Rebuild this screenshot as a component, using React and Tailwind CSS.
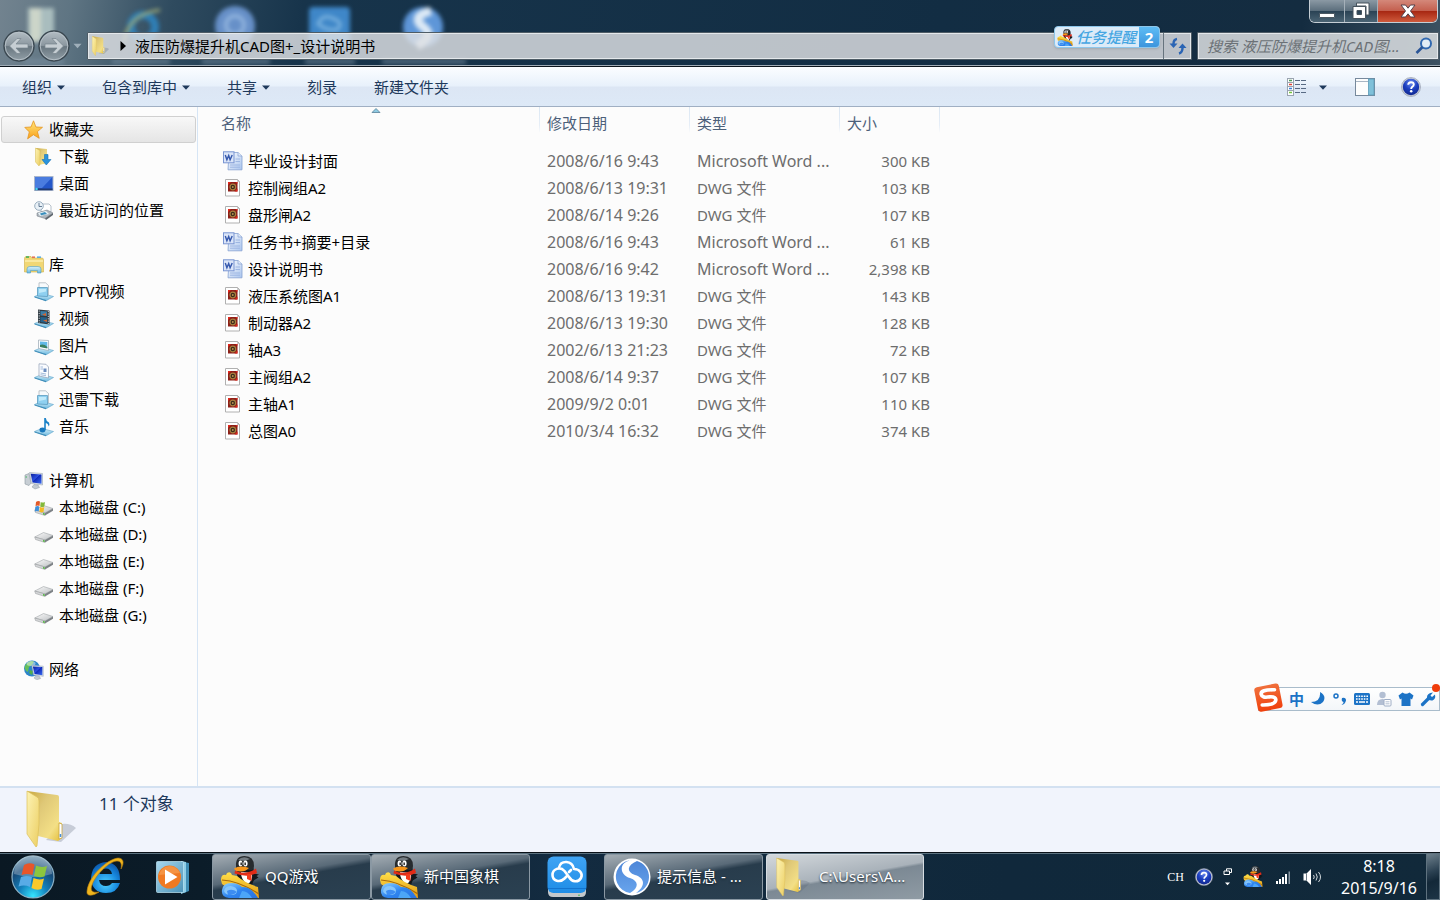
import React from "react";

const Defs = () => (
  <svg width="0" height="0" className="absolute" aria-hidden="true">
    <defs>
      <linearGradient id="folderFront" x1="0" y1="0" x2="1" y2="1">
        <stop offset="0" stopColor="#fdf3b4" />
        <stop offset="1" stopColor="#eccf64" />
      </linearGradient>
      <linearGradient id="folderBack" x1="0" y1="0" x2="1" y2="1">
        <stop offset="0" stopColor="#c9a83f" />
        <stop offset="0.35" stopColor="#dfc877" />
        <stop offset="0.75" stopColor="#f3df86" />
        <stop offset="1" stopColor="#e3bd35" />
      </linearGradient>
      <linearGradient id="screen" x1="0" y1="0" x2="1" y2="1">
        <stop offset="0" stopColor="#0a1f9c" />
        <stop offset="0.45" stopColor="#2b4fe0" />
        <stop offset="0.5" stopColor="#0f2bbb" />
        <stop offset="1" stopColor="#3c6cf0" />
      </linearGradient>
      <linearGradient id="tray" x1="0" y1="0" x2="0" y2="1">
        <stop offset="0" stopColor="#d8f1fb" />
        <stop offset="1" stopColor="#6bb7de" />
      </linearGradient>
      <linearGradient id="drive" x1="0" y1="0" x2="1" y2="1">
        <stop offset="0" stopColor="#fbfbfb" />
        <stop offset="1" stopColor="#bcbfc2" />
      </linearGradient>
      <radialGradient id="help" cx="0.5" cy="0.25" r="0.8">
        <stop offset="0" stopColor="#6f8ff0" />
        <stop offset="0.5" stopColor="#1c3fc0" />
        <stop offset="1" stopColor="#0f2488" />
      </radialGradient>
      <radialGradient id="orb" cx="0.5" cy="0.95" r="0.95">
        <stop offset="0" stopColor="#35e4ff" />
        <stop offset="0.35" stopColor="#1482bd" />
        <stop offset="0.7" stopColor="#164a78" />
        <stop offset="1" stopColor="#6d94ae" />
      </radialGradient>
      <radialGradient id="ieBlue" cx="0.5" cy="0.7" r="0.7">
        <stop offset="0" stopColor="#4fd0ff" />
        <stop offset="0.6" stopColor="#1687dd" />
        <stop offset="1" stopColor="#0d56a8" />
      </radialGradient>
      <linearGradient id="navGlass" x1="0" y1="0" x2="0" y2="1">
        <stop offset="0" stopColor="#b4bec5" />
        <stop offset="0.48" stopColor="#8b979f" />
        <stop offset="0.52" stopColor="#68767f" />
        <stop offset="1" stopColor="#93a0a8" />
      </linearGradient>
      <linearGradient id="sogou" x1="0" y1="0" x2="0" y2="1">
        <stop offset="0" stopColor="#f0703c" />
        <stop offset="1" stopColor="#f0400c" />
      </linearGradient>
      <linearGradient id="cloudBlue" x1="0" y1="0" x2="0" y2="1">
        <stop offset="0" stopColor="#3fa4f4" />
        <stop offset="1" stopColor="#1f8de6" />
      </linearGradient>
      <linearGradient id="wmp" x1="0" y1="0" x2="1" y2="1">
        <stop offset="0" stopColor="#a8d8ee" />
        <stop offset="1" stopColor="#4c93b8" />
      </linearGradient>
      <linearGradient id="swirl" x1="0" y1="0" x2="0" y2="1">
        <stop offset="0" stopColor="#4c86d8" />
        <stop offset="1" stopColor="#68a4ec" />
      </linearGradient>
      <linearGradient id="star" x1="0" y1="0" x2="0" y2="1">
        <stop offset="0" stopColor="#ffe77c" />
        <stop offset="1" stopColor="#f9a11b" />
      </linearGradient>
      <linearGradient id="wordPage" x1="0" y1="0" x2="1" y2="1">
        <stop offset="0" stopColor="#ffffff" />
        <stop offset="1" stopColor="#a9c4ee" />
      </linearGradient>
      <linearGradient id="board" x1="0" y1="0" x2="0" y2="1">
        <stop offset="0" stopColor="#ffe04a" />
        <stop offset="1" stopColor="#e49a12" />
      </linearGradient>
      <linearGradient id="wave" x1="0" y1="0" x2="1" y2="1">
        <stop offset="0" stopColor="#8fd2ff" />
        <stop offset="0.5" stopColor="#2f86f0" />
        <stop offset="1" stopColor="#2a72e0" />
      </linearGradient>
    </defs>
  </svg>
);

const Svg = ({ box = "0 0 20 20", className = "size-5 shrink-0", children }) => (
  <svg viewBox={box} className={className} aria-hidden="true">
    {children}
  </svg>
);

const Folder = ({ className }) => (
  <Svg box="0 0 50 58" className={className}>
    <path d="M35 52 L50 38 Q44 33 36 34 L20 50Z" fill="#5b6578" opacity="0.28" />
    <path d="M1 1 L31 5 Q33 5 33 7 V32 L36 33 V48 L32 51 L12 46Z" fill="url(#folderBack)" />
    <path d="M33 33 L36 34 V48 L33 49Z" fill="#fff" stroke="#c9a640" strokeWidth="0.8" />
    <path d="M33.700 44 h1.600 v3 h-1.600z" fill="#4a90d9" />
    <path d="M1 1 L11 7 Q13 8 13 11 V34 L11 56 L10 57 L1 44Z" fill="url(#folderFront)" stroke="#dcc05a" strokeWidth="0.7" />
  </Svg>
);

const Penguin = ({ className }) => (
  <Svg box="0 0 38 42" className={className}>
    <path d="M31 17 L38 18.500 L35.500 20 L37.500 21.500 L32 25Z" fill="#15181c" />
    <path d="M17 12 Q14 20 20 27 L31 29 Q35 20 32 11Z" fill="#15181c" />
    <path d="M20 16 Q20 24 26 28 Q32 26 31 17Z" fill="#fff" />
    <path d="M15 11 Q14 0 23.500 0 Q33 0 33 10 Q33 13 31 14 H16Z" fill="#272b2e" />
    <path d="M17 4 Q22 -1 29 3 L24 5Z" fill="#747c82" />
    <ellipse cx="19.500" cy="7.500" rx="1.900" ry="2.900" fill="#fff" />
    <ellipse cx="24.500" cy="7.500" rx="2.100" ry="3" fill="#fff" />
    <rect x="19.500" y="6.500" width="1.300" height="2.600" fill="#111" />
    <rect x="23.500" y="6.500" width="1.300" height="2.600" fill="#111" />
    <path d="M13 12.500 Q19 9 28 12 Q24 16 19 15.500 Q14 15.500 13 12.500Z" fill="#f7961b" />
    <path d="M14 14.500 Q24 20 35 12.500 L36 17 Q27 22 13.500 17.500Z" fill="#e22b17" />
    <path d="M26 18 h4.500 v7 l-4.500 -2z" fill="#f13a1c" />
    <path d="M0 24 Q0 18 5 19 L6 17 Q10 15 11 19 L16 20 Q24 27 37 31 L38 42 H20 L1 28Z" fill="url(#board)" />
    <path d="M1 24 Q18 25 38 38" fill="none" stroke="#a8690a" strokeWidth="1.200" />
    <path d="M1 34 Q2 27 10 27 Q17 27 21 31 Q30 30 37 42 H8 Q0 41 1 34Z" fill="url(#wave)" />
    <path d="M3 35 Q4 30 10 30 Q16 31 16 35 Q16 39 10 39 Q4 39 3 35Z" fill="#86c6fb" />
    <path d="M6 35 Q11 32 16 36 Q12 40 7 39Z" fill="#3d8df2" />
    <path d="M21 35 Q27 35 31 42 H18Z" fill="#4ca6f7" />
  </Svg>
);

const Help = ({ className }) => (
  <Svg className={className}>
    <circle cx="10" cy="10" r="9.500" fill="#c9ced8" stroke="#8a92a5" strokeWidth="0.6" />
    <circle cx="10" cy="10" r="8.200" fill="url(#help)" />
    <path d="M7.200 7.800 Q7.300 5.200 10 5.200 Q12.800 5.200 12.800 7.600 Q12.800 9 11.200 9.900 Q10.200 10.500 10.200 11.900" fill="none" stroke="#fff" strokeWidth="1.900" />
    <circle cx="10.200" cy="14.300" r="1.250" fill="#fff" />
  </Svg>
);

const Swirl = ({ className }) => (
  <Svg box="0 0 38 38" className={className}>
    <circle cx="19" cy="19" r="18.500" fill="#fff" />
    <path d="M20 2 C5 3 6 17 17 20 C26 23 26 30 17 35 A16.500 16.500 0 0 1 6 9 Q11 2 20 2Z" fill="url(#swirl)" />
    <path d="M24 3 A16.500 16.500 0 0 1 23 35 C33 28 32 20 22 17 C13 14 14 7 24 3Z" fill="url(#swirl)" />
  </Svg>
);

const CloudApp = ({ className }) => (
  <Svg box="0 0 40 41" className={className}>
    <path d="M1 33 H39 V36 Q39 41 34 41 H6 Q1 41 1 36Z" fill="#c3c8cc" />
    <rect x="0.500" y="0.500" width="39" height="36.500" rx="6" fill="url(#cloudBlue)" />
    <path d="M1 32.500 H39" stroke="#1575cf" strokeWidth="1" />
    <circle cx="32" cy="39.200" r="0.8" fill="#3bb54a" />
    <path d="M12 11.500 C14 4 25 4 27 13 C33 13 36 18 34 22 C31 27 25 26 22 21 L17.500 15 C13 10 5.500 13 5.500 19 C5.500 25 13 27 17.500 22.500 L19.500 20.500 M22 16 L24 14" fill="none" stroke="#fff" strokeWidth="2.600" strokeLinecap="round" strokeLinejoin="round" />
  </Svg>
);

const Explorer = ({ className }) => (
  <Svg box="0 0 40 40" className={className}>
    <path d="M35 23 H14 Q15 29 21 29 Q25 29 27 26 H35 Q32 36 21 36 Q7 36 6 21 Q7 6 21 5 Q35 6 35 23Z M14.500 17 H27 Q26 11.500 21 11.500 Q16 11.500 14.500 17Z" fill="url(#ieBlue)" fillRule="evenodd" />
    <path d="M36 12 C40 5 38 1 33 1 C23 2 4 18 2 34 C1 40 8 39 14 35 C7 36 5 34 7 28 C11 17 25 4 32 4 C36 4 37 7 36 12Z" fill="#efb51e" stroke="#b97e0c" strokeWidth="0.6" />
  </Svg>
);

const MediaPlayer = ({ className }) => (
  <Svg box="0 0 34 34" className={className}>
    <path d="M28 2 L33 3 V31 L28 33Z" fill="#3f8db5" />
    <path d="M25 1 L30 2 V32 L25 34Z" fill="#8fcfe8" />
    <rect x="0.500" y="1.500" width="27" height="31" rx="1" fill="url(#wmp)" stroke="#c2e6f5" strokeWidth="0.7" />
    <circle cx="13.500" cy="17" r="11.500" fill="#f07a22" />
    <path d="M3 15 A11 11 0 0 1 24 13Z" fill="#f8a359" opacity="0.6" />
    <path d="M9 9.500 L21.500 17 L9 24.500Z" fill="#fff" />
  </Svg>
);

const StartOrb = ({ className }) => (
  <Svg box="0 0 44 44" className={className}>
    <circle cx="22" cy="22" r="21" fill="url(#orb)" stroke="#8db3c8" strokeWidth="1.200" />
    <path d="M3 19 A19 19 0 0 1 41 19 Q22 25 3 19Z" fill="#fff" opacity="0.27" />
    <path d="M13 10 Q18 7 23.500 9.500 L21.500 20 Q16 18 10.500 20Z" fill="#e8562a" />
    <path d="M25 10.500 Q30.500 13 36 11 L33.500 21.500 Q28 23 23 21Z" fill="#8cc63e" />
    <path d="M10 22 Q15.500 20 21 22 L19 32 Q13.500 29.500 7.500 31.500Z" fill="#58abe6" />
    <path d="M22.500 23 Q28 25.500 33 23.500 L30.500 34 Q25.500 36 20.500 33Z" fill="#fbc92b" />
  </Svg>
);

const Star = () => (
  <Svg>
    <path d="M9.500 0.8 L11.900 7 L18.500 7.300 L13.400 11.600 L15.200 18.300 L9.400 14.700 L3.600 18.800 L5.300 11.900 L0.800 7.400 L7 7Z" fill="url(#star)" stroke="#e59420" strokeWidth="0.8" />
  </Svg>
);

const Download = () => (
  <Svg>
    <path d="M2 1 L13 2 V16 L5 18Z" fill="url(#folderBack)" />
    <path d="M1.500 1 L6 3.500 V17 L5 19 L1.500 15Z" fill="url(#folderFront)" stroke="#d5b850" strokeWidth="0.5" />
    <path d="M10.500 7.500 H14 V12.500 H17 L12.300 18 L8 12.500 H10.500Z" fill="#2a93dc" stroke="#1670b4" strokeWidth="0.6" />
  </Svg>
);

const Desktop = () => (
  <Svg>
    <rect x="0.500" y="2.500" width="18.500" height="14" fill="#2457c9" stroke="#a9b6cc" />
    <path d="M1 3 H18.500 L8 14 H1Z" fill="#6a9bf0" opacity="0.55" />
    <rect x="1" y="14.500" width="17.500" height="1.700" fill="#21396d" />
    <circle cx="2.500" cy="15" r="1.300" fill="#46d4ee" />
  </Svg>
);

const Recent = () => (
  <Svg>
    <path d="M7 3 H15 L17 5 V11 H7Z" fill="#fff" stroke="#9aa7b5" strokeWidth="0.7" />
    <path d="M3 12 L13 9 L19 12 L11 17.500 L3 15Z" fill="#aeb5bc" stroke="#6c7780" strokeWidth="0.5" />
    <path d="M4 12 L12 10 L15 13 L6 15Z" fill="#e8f3f8" />
    <path d="M6 12.500 L11 11 L13 13 L7 14.200Z" fill="#3b8ebc" />
    <path d="M11 17.500 L19 12 V14 L12 19Z" fill="#5e666e" />
    <circle cx="5" cy="5" r="4.300" fill="#e9f1f7" stroke="#8fa5b8" strokeWidth="0.9" />
    <path d="M5 2 V5.500 H8" fill="none" stroke="#56718a" strokeWidth="0.9" />
  </Svg>
);

const Library = () => (
  <Svg>
    <path d="M0.500 4 Q0.500 1.500 2 1.500 H7 L8 3 H18 Q19.500 3 19.500 5 V17 H0.500Z" fill="#f1d775" stroke="#cfae48" strokeWidth="0.6" />
    <rect x="2" y="1.300" width="3" height="1.500" fill="#3dae56" />
    <rect x="8" y="1.500" width="3" height="1.300" fill="#e2573b" />
    <rect x="13" y="1.500" width="4" height="1.300" fill="#3da0dc" />
    <path d="M1 6 H19" stroke="#fff3bd" strokeWidth="1.200" />
    <path d="M3 18 V14 Q3 11.500 6 11.500 H14 Q17 11.500 17 14 V18 H13.500 V15.500 H6.500 V18Z" fill="url(#tray)" stroke="#4f9dc5" strokeWidth="0.6" />
  </Svg>
);

const Stand = () => (
  <>
    <path d="M0.500 14.500 L8 11.500 L19.500 14.500 L12 18.800Z" fill="url(#tray)" stroke="#5ba3c9" strokeWidth="0.6" />
    <path d="M0.500 14.500 L12 18 V19.200 L0.500 15.500Z" fill="#3f8db8" />
  </>
);

const LibGeneric = () => (
  <Svg>
    <Stand />
    <path d="M5 0.800 H11.500 L14.500 3.500 V13 H5Z" fill="#f7fafc" stroke="#a3adb6" strokeWidth="0.7" />
    <path d="M3.500 5.500 L13.500 5.500 V14.500 L3.500 14Z" fill="#8fd0f0" stroke="#5b9cc0" strokeWidth="0.8" />
    <path d="M5 7 H12 V9.500 L5 11Z" fill="#c1eafa" />
  </Svg>
);

const LibVideo = () => (
  <Svg>
    <Stand />
    <path d="M4 0.500 L15.500 1.500 V15.500 L4 14Z" fill="#303a42" />
    <path d="M6.500 2 L13 2.500 V7 L6.500 6.500Z" fill="#3b7fa9" />
    <path d="M6.500 8 L13 8.500 V14 L6.500 13Z" fill="#24618b" />
    <path d="M8 5.500 l4 -1.500 v3z M9 11.500 l4 -1 v2.500z" fill="#d5642f" />
    <path d="M5.200 1.500 V14 M14.300 2 V15" stroke="#cfd8de" strokeWidth="1" strokeDasharray="1.200 1.200" />
  </Svg>
);

const LibPicture = () => (
  <Svg>
    <Stand />
    <path d="M4.500 4 L14.500 4.500 V14.500 L4.500 12.500Z" fill="#fafcfd" stroke="#98a6b2" strokeWidth="0.7" />
    <path d="M6 5.500 L13.300 6 V12 L6 10.800Z" fill="#62b9e8" />
    <path d="M6 9 Q10 7.500 13.300 11 V12.500 L6 11Z" fill="#3c8060" />
  </Svg>
);

const LibDocument = () => (
  <Svg>
    <Stand />
    <path d="M5 0.800 L12 1.300 L14.500 4 V15 L5 13Z" fill="#fafcff" stroke="#8f9eb4" strokeWidth="0.7" />
    <path d="M6.500 4 H9 M6.500 6 H9 M6.500 10 L12 11 M6.500 11.700 L12 12.700" stroke="#8facd0" strokeWidth="0.8" />
    <rect x="9.500" y="5.500" width="3" height="3.500" fill="#6c8dc0" />
  </Svg>
);

const LibMusic = () => (
  <Svg>
    <Stand />
    <ellipse cx="8.500" cy="13" rx="3" ry="2.400" fill="#1877bd" />
    <path d="M10.200 13 V1 H11.800 Q12 4 15 5.500 Q16 7.500 14.500 9.500 Q14.500 6.500 11.800 6 V13Z" fill="#1c82c8" />
  </Svg>
);

const Monitor = () => (
  <>
    <path d="M5.500 1.500 L18.500 2.500 V14 L7.500 12.500Z" fill="#dce3ea" stroke="#9aa6b2" strokeWidth="0.6" />
    <path d="M6.700 2.700 L17.500 3.500 V12.800 L8.500 11.500Z" fill="url(#screen)" />
    <path d="M10 13.500 L14 14 L15.500 16.500 L11 18 L8 16Z" fill="#c2cad2" stroke="#8d98a3" strokeWidth="0.5" />
  </>
);

const Computer = () => (
  <Svg>
    <path d="M1 4 L5 2.500 L7 12 L5 14.500 L1 13Z" fill="#c7ced4" stroke="#8c979f" strokeWidth="0.6" />
    <path d="M1.500 6 H3" stroke="#43b85a" strokeWidth="1" />
    <Monitor />
  </Svg>
);

const Network = () => (
  <Svg>
    <circle cx="8" cy="8.500" r="8" fill="#2d86c9" />
    <path d="M2 4 Q6 0 10 1.500 L8 5 L5 7 L4 12 Q1 11 0.500 7Z" fill="#66bf5b" />
    <path d="M6 10 l3 1 -1 4 -3 -2z" fill="#4fae4c" />
    <ellipse cx="7" cy="3.500" rx="4.500" ry="2.500" fill="#fff" opacity="0.45" />
    <g transform="translate(3 4) scale(0.88)">
      <Monitor />
    </g>
  </Svg>
);

const DriveShape = () => (
  <>
    <path d="M0.800 12 L9.500 7.500 L19 10.500 L11 15Z" fill="url(#drive)" stroke="#a0a4a7" strokeWidth="0.6" />
    <path d="M0.800 12 L11 15 V17.500 L1.500 14.500Z" fill="#d5d7d9" stroke="#8e9295" strokeWidth="0.5" />
    <path d="M11 15 L19 10.500 V12.800 L11 17.500Z" fill="#7d8286" />
    <path d="M9 15 l1.700 0.500 v1.500 l-1.700 -0.500z" fill="#48b733" />
  </>
);

const Drive = () => (
  <Svg>
    <DriveShape />
  </Svg>
);

const SystemDrive = () => (
  <Svg>
    <DriveShape />
    <path d="M2 4 Q4 2.500 6 3.500 L5.500 8 Q3.500 7 1.500 8.300Z" fill="#e25a28" />
    <path d="M6.700 4 Q9 5 11 4 L10.300 8.500 Q8.500 9.500 6.200 8.500Z" fill="#83b93a" />
    <path d="M1.300 8.800 Q3.500 7.500 5.300 8.500 L4.700 13.300 Q2.800 12.500 0.800 13.500Z" fill="#3f90da" />
    <path d="M6 9 Q8.500 10 10.300 9 L9.500 14 Q7.500 15 5.400 13.800Z" fill="#f4bb24" />
  </Svg>
);

const WordFile = () => (
  <Svg className="mb-0.5 size-5 shrink-0">
    <path d="M6 1.500 H15 L19 5 V18.800 H5Z" fill="url(#wordPage)" stroke="#86a2d2" strokeWidth="0.8" />
    <path d="M15 1.500 V5 H19" fill="#dfe9f8" stroke="#86a2d2" strokeWidth="0.7" />
    <path d="M7 14 H17 M7 16.200 H17 M12.500 8 H17 M12.500 10.500 H17" stroke="#9db6e2" strokeWidth="1" />
    <rect x="0.500" y="0.800" width="10.500" height="11" fill="#dbe5f8" stroke="#7995d2" />
    <path d="M2.300 4 L3.900 8.800 L5.700 4.500 L7.100 8.800 L9.200 4" fill="none" stroke="#3558ad" strokeWidth="1.400" />
  </Svg>
);

const DwgFile = () => (
  <Svg className="mb-0.5 size-5 shrink-0">
    <path d="M2.500 1.500 H14.500 L16.500 3.500 V18 H2.500Z" fill="#fff" stroke="#b0b0b0" />
    <path d="M14.500 1.500 V3.500 H16.500" fill="none" stroke="#b0b0b0" strokeWidth="0.7" />
    <rect x="5" y="4" width="9.500" height="9.500" fill="#8c2018" />
    <path d="M5 4 h3 l-3 3z M14.500 4 h-2 l2 2z M14.500 13.500 h-3 l3 -3z" fill="#e0261b" />
    <circle cx="9.800" cy="9" r="2.800" fill="#3c2c1c" stroke="#a8813f" strokeWidth="1.200" />
    <circle cx="9.800" cy="9" r="0.9" fill="#c2964f" />
  </Svg>
);

const Caret = () => (
  <svg viewBox="0 0 8 5" className="h-[5px] w-2" aria-hidden="true">
    <path d="M0 0.500 H8 L4 4.800Z" fill="#1e395b" />
  </svg>
);

const nav = [
  {
    label: "收藏夹",
    Icon: Star,
    active: true,
    items: [
      ["下载", Download],
      ["桌面", Desktop],
      ["最近访问的位置", Recent],
    ],
  },
  {
    label: "库",
    Icon: Library,
    items: [
      ["PPTV视频", LibGeneric],
      ["视频", LibVideo],
      ["图片", LibPicture],
      ["文档", LibDocument],
      ["迅雷下载", LibGeneric],
      ["音乐", LibMusic],
    ],
  },
  {
    label: "计算机",
    Icon: Computer,
    items: [
      ["本地磁盘 (C:)", SystemDrive],
      ["本地磁盘 (D:)", Drive],
      ["本地磁盘 (E:)", Drive],
      ["本地磁盘 (F:)", Drive],
      ["本地磁盘 (G:)", Drive],
    ],
  },
  { label: "网络", Icon: Network, items: [] },
];

const WORD = "Microsoft Word ...";
const DWG = "DWG 文件";
const files = [
  ["毕业设计封面", "2008/6/16 9:43", WORD, "300 KB"],
  ["控制阀组A2", "2008/6/13 19:31", DWG, "103 KB"],
  ["盘形闸A2", "2008/6/14 9:26", DWG, "107 KB"],
  ["任务书+摘要+目录", "2008/6/16 9:43", WORD, "61 KB"],
  ["设计说明书", "2008/6/16 9:42", WORD, "2,398 KB"],
  ["液压系统图A1", "2008/6/13 19:31", DWG, "143 KB"],
  ["制动器A2", "2008/6/13 19:30", DWG, "128 KB"],
  ["轴A3", "2002/6/13 21:23", DWG, "72 KB"],
  ["主阀组A2", "2008/6/14 9:37", DWG, "107 KB"],
  ["主轴A1", "2009/9/2 0:01", DWG, "110 KB"],
  ["总图A0", "2010/3/4 16:32", DWG, "374 KB"],
];

const DesktopBehindGlass = () => (
  <svg viewBox="0 0 480 66" className="absolute left-0 top-0 h-[66px] w-[480px] blur-[2px]" aria-hidden="true">
    <path d="M28 8 H54 V38 H28Z" fill="#a9bdbe" />
    <path d="M30 8 H41 V42 H30Z" fill="#ccd5c9" />
    <circle cx="143" cy="27" r="12" fill="none" stroke="#2f7fb6" strokeWidth="8" />
    <path d="M124 42 Q128 14 160 10" fill="none" stroke="#98a678" strokeWidth="3" />
    <circle cx="235" cy="26" r="20" fill="#6790c8" />
    <circle cx="235" cy="25" r="9" fill="none" stroke="#8fb2dd" strokeWidth="4" />
    <rect x="309" y="7" width="41" height="40" rx="4" fill="#3f87c8" />
    <path d="M318 24 Q322 14 332 18 Q344 22 338 29 Q328 32 318 24Z" fill="none" stroke="#7db4e0" strokeWidth="3" />
    <circle cx="423" cy="27" r="20" fill="#5e96d8" />
    <path d="M431 11 Q411 16 422 26 Q436 35 417 46" fill="none" stroke="#dce9f5" strokeWidth="9" />
    <g fill="#7d93a5" opacity="0.55">
      <rect x="24" y="59" width="40" height="5" />
      <rect x="112" y="59" width="58" height="5" />
      <rect x="202" y="59" width="68" height="5" />
      <rect x="305" y="59" width="50" height="5" />
      <rect x="382" y="59" width="84" height="5" />
    </g>
  </svg>
);

const NavButton = ({ label, flip }) => (
  <button aria-label={label} className="size-8">
    <svg viewBox="0 0 32 32" className={flip ? "size-8 -scale-x-100" : "size-8"} aria-hidden="true">
      <circle cx="16" cy="16" r="15" fill="url(#navGlass)" stroke="#3a4750" strokeWidth="1.400" />
      <circle cx="16" cy="16" r="13.800" fill="none" stroke="#b9c3c9" strokeWidth="0.900" />
      <path d="M6.500 16 L14 8.500 H18 L13 14 H25 V18 H13 L18 23.500 H14Z" fill="#c6ced3" stroke="#77848c" strokeWidth="0.7" />
    </svg>
  </button>
);

const TitleBar = () => (
  <header className="relative h-[67px] shrink-0 overflow-hidden border-b border-[#0b141c] bg-[linear-gradient(100deg,#72838f_0,#5f7583_70px,#2f4b5f_170px,#17344b_300px,#122d43_65%,#142c40_90%,#3d5262_100%)]">
    <DesktopBehindGlass />
    <div className="relative flex h-full flex-col justify-between border-b border-[#9fabb5] pb-[5px]">
      <div className="flex h-[23px] justify-end pr-[2px]">
        <div className="flex overflow-hidden rounded-b-md border border-t-0 border-[#c5ced5] bg-[#22394b]">
          <button aria-label="最小化" className="flex w-[35px] items-center justify-center border-r border-[#a5b0b9] bg-[linear-gradient(#8b99a4,#5c6f7d_48%,#2b4355_52%,#4b6474)] pt-2">
            <span className="h-[5px] w-4 rounded-[1px] border border-[#4b5862] bg-white" />
          </button>
          <button aria-label="向下还原" className="flex w-[33px] items-center justify-center border-r border-[#a5b0b9] bg-[linear-gradient(#8b99a4,#5c6f7d_48%,#2b4355_52%,#4b6474)]">
            <svg viewBox="0 0 18 18" className="size-[18px]" aria-hidden="true">
              <path d="M4.500 1 H17 V13 H14 V4 H4.500Z" fill="#fff" stroke="#47535d" />
              <path d="M1 4.500 H13.500 V16.500 H1Z M5 8.500 V12.500 H9.500 V8.500Z" fill="#fff" stroke="#47535d" fillRule="evenodd" />
            </svg>
          </button>
          <button aria-label="关闭" className="flex w-[59px] items-center justify-center bg-[linear-gradient(#d4887a,#c4604f_48%,#a82813_52%,#cf5a3c)]">
            <svg viewBox="0 0 16 14" className="h-3.5 w-4" aria-hidden="true">
              <path d="M1 1 H5.500 L8 4.200 L10.500 1 H15 L10.500 7 L15 13 H10.500 L8 9.800 L5.500 13 H1 L5.500 7Z" fill="#fff" stroke="#54414a" />
            </svg>
          </button>
        </div>
      </div>
      <div className="flex h-7 items-center gap-[5px] pl-[3px] pr-px">
        <div className="flex items-center gap-[3px]">
          <NavButton label="后退" />
          <NavButton label="前进" flip />
          <button aria-label="最近浏览" className="flex w-[9px] items-center justify-center">
            <svg viewBox="0 0 10 6" className="h-1.5 w-2.5" aria-hidden="true">
              <path d="M0.500 0.500 H9.500 L5 5.500Z" fill="#9fafba" />
            </svg>
          </button>
        </div>
        <div className="flex h-7 min-w-0 flex-1 items-stretch rounded-[1px] border border-[#4e5c66] bg-[#dde0e3d4] ring-1 ring-inset ring-[#e4e8eb]">
          <Folder className="ml-[3px] mt-[3px] h-5 w-[19px] shrink-0" />
          <button aria-label="展开位置" className="ml-px flex w-6 items-center justify-center">
            <svg viewBox="0 0 6 10" className="h-2.5 w-1.5" aria-hidden="true">
              <path d="M0.500 0 L6 5 L0.500 10Z" fill="#000" />
            </svg>
          </button>
          <button className="whitespace-nowrap text-[15px] leading-6 text-black">液压防爆提升机CAD图+_设计说明书</button>
          <div className="flex-1" />
          <button aria-label="刷新" className="flex w-7 items-center justify-center border-l border-[#66737d]">
            <svg viewBox="0 0 18 18" className="size-[18px]" aria-hidden="true">
              <path d="M8 2 Q4.500 2.500 4.500 7" fill="none" stroke="#2a64b4" strokeWidth="2.400" />
              <path d="M0.500 6.500 H8.500 L4.500 11Z" fill="#2a64b4" />
              <path d="M10 16.500 Q13.500 15.500 13.500 11" fill="none" stroke="#2a64b4" strokeWidth="2.400" />
              <path d="M9.500 11 H17.500 L13.500 6.500Z" fill="#2a64b4" />
            </svg>
          </button>
        </div>
        <label className="flex h-7 w-[242px] items-center rounded-[1px] border border-[#4e5c66] bg-[#dde0e3d9] pl-[9px] pr-[5px] ring-1 ring-inset ring-[#e4e8eb]">
          <input
            aria-label="搜索"
            placeholder="搜索 液压防爆提升机CAD图..."
            className="min-w-0 flex-1 bg-transparent text-[15px] italic text-black outline-none placeholder:text-[#6b7176]"
          />
          <svg viewBox="0 0 18 18" className="size-[18px]" aria-hidden="true">
            <circle cx="11" cy="6.500" r="5" fill="#e3edf5" stroke="#3169b0" strokeWidth="2" />
            <path d="M7.500 10 L1.500 16" stroke="#2a5596" strokeWidth="2.600" />
          </svg>
        </label>
      </div>
    </div>
    <button className="absolute right-[280px] top-[26px] flex h-[22px] items-stretch overflow-hidden rounded-[4px] border border-[#8dc6ea] bg-[#dcebf8] shadow">
      <Penguin className="my-auto ml-[2px] h-[17px] w-4" />
      <span className="px-[3px] text-[15px] font-medium italic leading-5 text-[#46a6e2]">任务提醒</span>
      <span className="flex w-5 items-center justify-center bg-[linear-gradient(#5dbcf5,#3c95dd)] text-[15px] font-bold text-white">2</span>
    </button>
  </header>
);

const Toolbar = () => (
  <div className="flex h-10 shrink-0 items-center justify-between border-b border-[#a0afc3] bg-[linear-gradient(#fbfdff,#e8f1fb_48%,#dce6f4_52%,#dde9f7)] pl-[22px] pr-[19px] pt-px text-[15px] text-[#1e395b]">
    <div className="flex items-center gap-[37px]">
      {[
        ["组织", true],
        ["包含到库中", true],
        ["共享", true],
        ["刻录", false],
        ["新建文件夹", false],
      ].map(([label, menu]) => (
        <button key={label} className="flex items-center gap-[5px]">
          {label}
          {menu && <Caret />}
        </button>
      ))}
    </div>
    <div className="flex items-center">
      <button aria-label="更改视图">
        <svg viewBox="0 0 20 18" className="h-[18px] w-5" aria-hidden="true">
          <rect x="0.500" y="0.500" width="6" height="17" fill="#fff" stroke="#9aa4b0" />
          <path d="M0.500 4.500 H6.500 M0.500 8.500 H6.500 M0.500 12.500 H6.500" stroke="#9aa4b0" />
          <path d="M2 2.500 H5" stroke="#4a9a58" strokeWidth="1.500" />
          <path d="M2 6.500 H5" stroke="#e0453a" strokeWidth="1.500" />
          <path d="M2 10.500 H5" stroke="#3b7ed8" strokeWidth="1.500" />
          <path d="M2 14.500 H5" stroke="#73c33c" strokeWidth="1.500" />
          <path d="M8 2.500 H19 M8 6.500 H19 M8 10.500 H19 M8 14.500 H19" stroke="#586a84" strokeDasharray="5 1" />
        </svg>
      </button>
      <button aria-label="更多视图选项" className="ml-3">
        <Caret />
      </button>
      <button aria-label="显示预览窗格" className="ml-7">
        <svg viewBox="0 0 20 18" className="h-[18px] w-5" aria-hidden="true">
          <rect x="0.500" y="0.500" width="19" height="17" fill="#fdfdfd" stroke="#77899c" />
          <path d="M1 3.500 H13" stroke="#a9b6c4" />
          <rect x="13.500" y="1" width="5.500" height="16" fill="#7fc0d9" stroke="#5b9bb8" strokeWidth="0.8" />
        </svg>
      </button>
      <button aria-label="获取帮助" className="ml-[26px]">
        <Help className="size-5" />
      </button>
    </div>
  </div>
);

const Sidebar = () => (
  <nav className="flex w-[198px] shrink-0 flex-col gap-[27px] border-r border-[#d6e5f5] pt-[9px] text-[15px]">
    {nav.map(({ label, Icon, active, items }) => (
      <div key={label}>
        <a
          href="#"
          className={
            active
              ? "mx-px flex h-[27px] items-center gap-[5px] rounded-[3px] border border-[#d0d0d0] bg-[linear-gradient(#f8f8f8,#e5e5e5)] pl-[22px]"
              : "flex h-[27px] items-center gap-[5px] pl-6"
          }
        >
          <Icon />
          {label}
        </a>
        {items.map(([name, ItemIcon]) => (
          <a key={name} href="#" className="flex h-[27px] items-center gap-[5px] pl-[34px]">
            <ItemIcon />
            {name}
          </a>
        ))}
      </div>
    ))}
  </nav>
);

const HeadCell = ({ label, pad, width, sorted }) => (
  <th scope="col" className={`${width} h-[41px] p-0 text-left align-top font-normal`}>
    <div className={`${pad} relative flex h-8 items-start justify-between`}>
      <button className="h-8">{label}</button>
      {sorted && (
        <svg viewBox="0 0 10 5" className="absolute left-[173px] top-px h-[5px] w-2.5" aria-hidden="true">
          <path d="M1 4.500 L5 0.500 L9 4.500Z" fill="#8fcbe3" stroke="#47738c" strokeWidth="0.7" />
        </svg>
      )}
      <span className="h-[26px] w-px bg-[linear-gradient(#dbe7f3,#e6eef7_70%,#fcfcfc)]" />
    </div>
  </th>
);

const FileList = () => (
  <main className="min-w-0 flex-1">
    <table className="w-[742px] table-fixed border-collapse text-[15px]">
      <thead className="text-[#4c607a]">
        <tr>
          <HeadCell label="名称" width="w-[342px]" pad="pl-[23px]" sorted />
          <HeadCell label="修改日期" width="w-[150px]" pad="pl-[7px]" />
          <HeadCell label="类型" width="w-[150px]" pad="pl-[7px]" />
          <HeadCell label="大小" width="w-[100px]" pad="pl-[7px]" />
        </tr>
      </thead>
      <tbody className="text-[#6d6d6d]">
        {files.map(([name, date, type, size]) => (
          <tr key={name} className="h-[27px]">
            <td className="p-0 pl-[25px]">
              <span className="flex items-center gap-[5px] text-black">
                {type === WORD ? <WordFile /> : <DwgFile />}
                {name}
              </span>
            </td>
            <td className="whitespace-nowrap p-0 pb-0.5 pl-[7px] text-base leading-5">{date}</td>
            <td className={type === WORD ? "whitespace-nowrap p-0 pb-0.5 pl-[7px] text-base leading-5" : "whitespace-nowrap p-0 pl-[7px]"}>
              {type}
            </td>
            <td className="whitespace-nowrap p-0 pr-[10px] text-right">{size}</td>
          </tr>
        ))}
      </tbody>
    </table>
  </main>
);

const Ime = () => (
  <div className="absolute right-0 top-[684px] flex h-7 items-center">
    <div className="mt-0.5 flex h-6 items-center gap-[6px] border border-[#a9bccb] bg-[linear-gradient(#ffffff,#f3f6f9)] pl-[30px] pr-[3px] text-[#1c73c6]">
      <button className="text-[15px] font-bold leading-5">中</button>
      <button aria-label="半角">
        <Svg box="0 0 16 16" className="size-4">
          <path d="M10 1 Q17 5 13 11 Q8 16 1 11 Q11 11 10 1Z" fill="#1c73c6" />
        </Svg>
      </button>
      <button aria-label="中文标点">
        <Svg box="0 0 16 16" className="size-4">
          <circle cx="4" cy="5" r="2" fill="none" stroke="#1c73c6" strokeWidth="1.500" />
          <path d="M10 7 Q14 6 14 9.500 Q13 13.500 9.500 14 Q12 12 11.500 11 Q9 10.500 10 7Z" fill="#1c73c6" />
        </Svg>
      </button>
      <button aria-label="软键盘">
        <Svg box="0 0 16 16" className="size-4">
          <rect x="0" y="2" width="16" height="12" rx="1.500" fill="#1c73c6" />
          <path d="M2 5.200 H14 M2 8 H14" stroke="#fff" strokeWidth="1.500" strokeDasharray="1.600 1" />
          <path d="M2 11 H4 M5 11 H11 M12 11 H14" stroke="#fff" strokeWidth="1.500" />
        </Svg>
      </button>
      <button aria-label="登录">
        <Svg box="0 0 16 16" className="size-4">
          <circle cx="6.500" cy="4" r="3.200" fill="#b3bfd3" />
          <path d="M1 14 Q1 8 6.500 8 Q12 8 12 14Z" fill="#b3bfd3" />
          <rect x="8" y="8.500" width="7" height="6.500" rx="1" fill="#fff" stroke="#9eadc5" />
          <path d="M9.500 10.800 H13.500 M9.500 12.800 H13.500" stroke="#9eadc5" strokeWidth="0.8" />
        </Svg>
      </button>
      <button aria-label="皮肤">
        <Svg box="0 0 16 16" className="size-4">
          <path d="M4.500 1.500 Q8 4 11.500 1.500 L15.500 4.500 L14 8.500 L12.500 7.500 V15 H3.500 V7.500 L2 8.500 L0.500 4.500Z" fill="#1c73c6" />
        </Svg>
      </button>
      <button aria-label="工具箱">
        <Svg box="0 0 16 16" className="size-4">
          <path d="M2.500 13.500 L9 7" stroke="#1c73c6" strokeWidth="3.200" strokeLinecap="round" />
          <path d="M13 1.500 L10.500 4.500 L12 6 L15 3.500 Q16 8 12.500 9.500 Q8.500 10 7 7 Q6.500 2 13 1.500Z" fill="#1c73c6" />
        </Svg>
      </button>
    </div>
    <svg viewBox="0 0 30 30" className="absolute -left-1 -top-px size-[30px]" aria-hidden="true">
      <g transform="rotate(-11 15 15)">
        <rect x="2" y="2" width="25" height="25" rx="3" fill="url(#sogou)" />
        <path d="M22 8 Q8 5 8 10 Q8 14 16 14 Q23 15 21 19 Q19 23 7 20.500" fill="none" stroke="#fff" strokeWidth="3.600" strokeLinecap="round" />
      </g>
    </svg>
    <span className="absolute right-0 top-0 size-2 rounded-full bg-[#f03c0a]" />
  </div>
);

const TaskButton = ({ children, label, light }) => (
  <button
    className={
      light
        ? "flex h-[46px] w-[158px] items-center gap-[5px] rounded-[3px] border border-[#d7dde2] bg-[linear-gradient(170deg,#d3d8dc,#a9b2ba_48%,#7c8994_52%,#8f9ba4)] pl-[9px] text-[15px] text-white"
        : "flex h-[46px] w-[159px] items-center gap-[6px] rounded-[3px] border border-[#8a98a3] bg-[linear-gradient(170deg,#a4adb4,#596a78_42%,#283c4c_50%,#2b4152)] pl-2 text-[15px] text-white"
    }
  >
    {children}
    <span className="whitespace-nowrap [text-shadow:0_1px_2px_#17232d]">{label}</span>
  </button>
);

const Taskbar = () => (
  <footer className="flex h-12 shrink-0 items-center border-t border-[#0a1118] bg-[linear-gradient(90deg,#0a1823,#0b1c29_14%,#132b40_38%,#10283b_70%,#11293a)] shadow-[inset_0_1px_0_#5c7280]">
    <button aria-label="开始" className="ml-[11px]">
      <StartOrb className="size-11" />
    </button>
    <button aria-label="Internet Explorer" className="ml-[30px]">
      <Explorer className="size-10" />
    </button>
    <button aria-label="Windows Media Player" className="ml-[31px]">
      <MediaPlayer className="size-[34px]" />
    </button>
    <div className="ml-[22px] flex">
      <TaskButton label="QQ游戏">
        <Penguin className="h-[42px] w-[38px]" />
      </TaskButton>
      <TaskButton label="新中国象棋">
        <Penguin className="h-[42px] w-[38px]" />
      </TaskButton>
    </div>
    <button aria-label="云盘" className="ml-4">
      <CloudApp className="h-[41px] w-[42px]" />
    </button>
    <div className="ml-4 flex gap-[3px]">
      <TaskButton label="提示信息 - ...">
        <Swirl className="size-[38px]" />
      </TaskButton>
      <TaskButton label="C:\Users\A..." light>
        <Folder className="mr-1 h-10 w-[34px]" />
      </TaskButton>
    </div>
    <div className="ml-auto flex h-full items-center text-white">
      <button className="font-['Liberation_Serif',serif] text-xs">CH</button>
      <button aria-label="帮助" className="ml-[11px]">
        <Help className="size-[18px]" />
      </button>
      <button aria-label="语言栏选项" className="ml-[10px]">
        <Svg box="0 0 10 18" className="h-[18px] w-2.5">
          <path d="M3.500 3 V0.800 H8.500 V4.500 H6.500 M1 3 H6.500 V6.500 H1Z" fill="none" stroke="#fff" />
          <path d="M2 14.500 H7 L4.500 17.300Z" fill="#fff" />
        </Svg>
      </button>
      <button aria-label="QQ游戏托盘" className="ml-[10px]">
        <Penguin className="h-[21px] w-5" />
      </button>
      <button aria-label="网络信号" className="ml-3">
        <Svg box="0 0 16 14" className="h-3.5 w-4">
          <path d="M1 14 v-3 h2 v3z M4 14 v-5 h2 v5z M7 14 v-7 h2 v7z M10 14 v-10 h2 v10z" fill="#fff" />
          <path d="M13.500 14 V1.500 H15 V14Z" fill="#8494a0" />
        </Svg>
      </button>
      <button aria-label="音量" className="ml-3">
        <Svg box="0 0 20 18" className="h-[18px] w-5">
          <path d="M0.500 5.500 H3.500 L8 1 V17 L3.500 12.500 H0.500Z" fill="#fff" />
          <path d="M3.500 5.500 V12.500" stroke="#4b5c68" strokeWidth="0.8" />
          <path d="M10.500 7 Q12 9 10.500 11 M13 5.500 Q15.500 9 13 12.500 M15.500 4 Q19.500 9 15.500 14" fill="none" stroke="#d3dade" />
        </Svg>
      </button>
      <button className="ml-4 w-[80px] text-center text-base leading-[22px]">
        <time className="block">8:18</time>
        <time className="block">2015/9/16</time>
      </button>
      <button
        aria-label="显示桌面"
        className="ml-[7px] h-full w-3.5 border border-[#5f727f] bg-[linear-gradient(160deg,#6f818d,#2b4152_40%,#132838_60%,#1e3546)]"
      />
    </div>
  </footer>
);

export default function App() {
  return (
    <div className="relative flex min-h-screen flex-col overflow-hidden bg-[#fcfcfc] font-['Noto_Sans','Noto_Sans_CJK_SC',sans-serif] text-black">
      <Defs />
      <TitleBar />
      <Toolbar />
      <div className="flex flex-1">
        <Sidebar />
        <FileList />
      </div>
      <section className="flex h-[66px] shrink-0 items-start border-t-2 border-[#d3e1f1] bg-[#f1f4fc] pl-[26px] text-[17px] text-[#1e395b]">
        <Folder className="mt-0.5 h-[58px] w-[50px]" />
        <p className="ml-[23px] mt-0.5 leading-7">11 个对象</p>
      </section>
      <Taskbar />
      <Ime />
    </div>
  );
}
